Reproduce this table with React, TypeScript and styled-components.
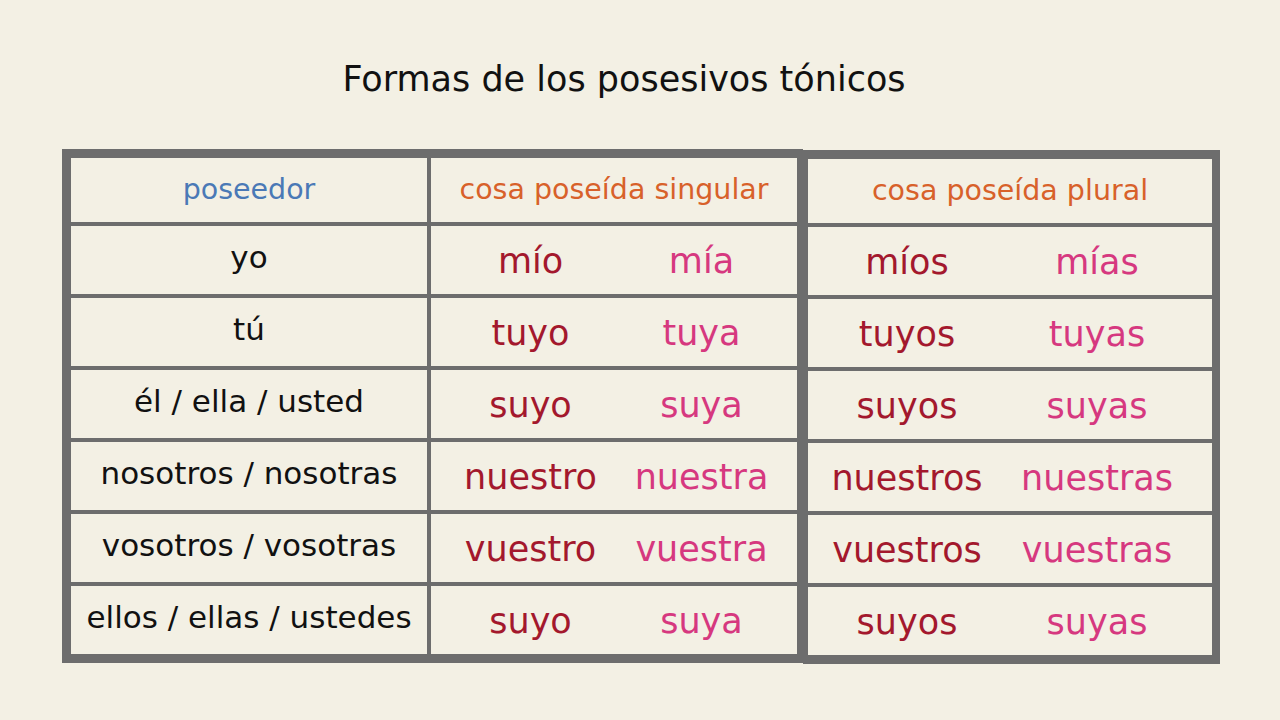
import { styled, createGlobalStyle } from 'styled-components';

const GlobalStyle = createGlobalStyle`
    html, body {
        margin: 0;
        padding: 0;
        background: #f3f0e4;
    }
    body {
        font-family: 'DejaVu Sans', 'Noto Sans', sans-serif;
    }
`;

const LINE = '#6d6d6d';

const Page = styled.div`
    width: 1280px;
    height: 720px;
    background: #f3f0e4;
    display: flex;
    flex-direction: column;
    padding-top: 57px;
    box-sizing: border-box;
    overflow: hidden;
`;

const Title = styled.h1`
    margin: 0 0 48px 0;
    padding-right: 32px;
    text-align: center;
    font-size: 35px;
    font-weight: normal;
    color: #111;
    line-height: 44px;
`;

const Tables = styled.div`
    display: flex;
    align-items: flex-start;
    padding-left: 62px;
`;

const Table = styled.div<{ $cols: string; $left: number; $right: number; $top: number }>`
    display: grid;
    grid-template-columns: ${p => p.$cols};
    grid-template-rows: 64px repeat(6, 68px);
    gap: 4px;
    background: ${LINE};
    border: 9px solid ${LINE};
    border-left-width: ${p => p.$left}px;
    border-right-width: ${p => p.$right}px;
    margin-top: ${p => p.$top}px;
`;

const Cell = styled.div`
    background: #f3f0e4;
    display: flex;
    align-items: center;
    justify-content: center;
    padding-bottom: 6px;
    box-sizing: border-box;
    white-space: nowrap;
`;

const Header = styled(Cell)<{ $color: string }>`
    color: ${p => p.$color};
    font-size: 28.5px;
    padding-bottom: 2px;
`;

const Person = styled(Cell)`
    color: #111;
    font-size: 31px;
`;

const Pair = styled(Cell)<{ $pl: number; $pr: number }>`
    display: grid;
    grid-template-columns: 1fr 1fr;
    padding: 2px ${p => p.$pr}px 0 ${p => p.$pl}px;
`;

const Word = styled.span<{ $color: string }>`
    text-align: center;
    color: ${p => p.$color};
    font-size: 35px;
`;

const MASC = '#a3182d';
const FEM = '#d6387f';

const rows = [
    { p: 'yo', s: ['mío', 'mía'], pl: ['míos', 'mías'] },
    { p: 'tú', s: ['tuyo', 'tuya'], pl: ['tuyos', 'tuyas'] },
    { p: 'él / ella / usted', s: ['suyo', 'suya'], pl: ['suyos', 'suyas'] },
    { p: 'nosotros / nosotras', s: ['nuestro', 'nuestra'], pl: ['nuestros', 'nuestras'] },
    { p: 'vosotros / vosotras', s: ['vuestro', 'vuestra'], pl: ['vuestros', 'vuestras'] },
    { p: 'ellos / ellas / ustedes', s: ['suyo', 'suya'], pl: ['suyos', 'suyas'] },
];

export const App = () => {
    return (
        <Page>
            <GlobalStyle />
            <Title>Formas de los posesivos tónicos</Title>
            <Tables>
                <Table $cols="356px 366px" $left={9} $right={6} $top={0}>
                    <Header $color="#4a79b6">poseedor</Header>
                    <Header $color="#d8612a">cosa poseída singular</Header>
                    {rows.map(r => (
                        <>
                            <Person key={r.p}>{r.p}</Person>
                            <Pair key={r.p + 's'} $pl={14} $pr={10}>
                                <Word $color={MASC}>{r.s[0]}</Word>
                                <Word $color={FEM}>{r.s[1]}</Word>
                            </Pair>
                        </>
                    ))}
                </Table>
                <Table $cols="404px" $left={5} $right={8} $top={1}>
                    <Header $color="#d8612a">cosa poseída plural</Header>
                    {rows.map(r => (
                        <Pair key={r.p + 'pl'} $pl={4} $pr={20}>
                            <Word $color={MASC}>{r.pl[0]}</Word>
                            <Word $color={FEM}>{r.pl[1]}</Word>
                        </Pair>
                    ))}
                </Table>
            </Tables>
        </Page>
    );
}

export default App;
